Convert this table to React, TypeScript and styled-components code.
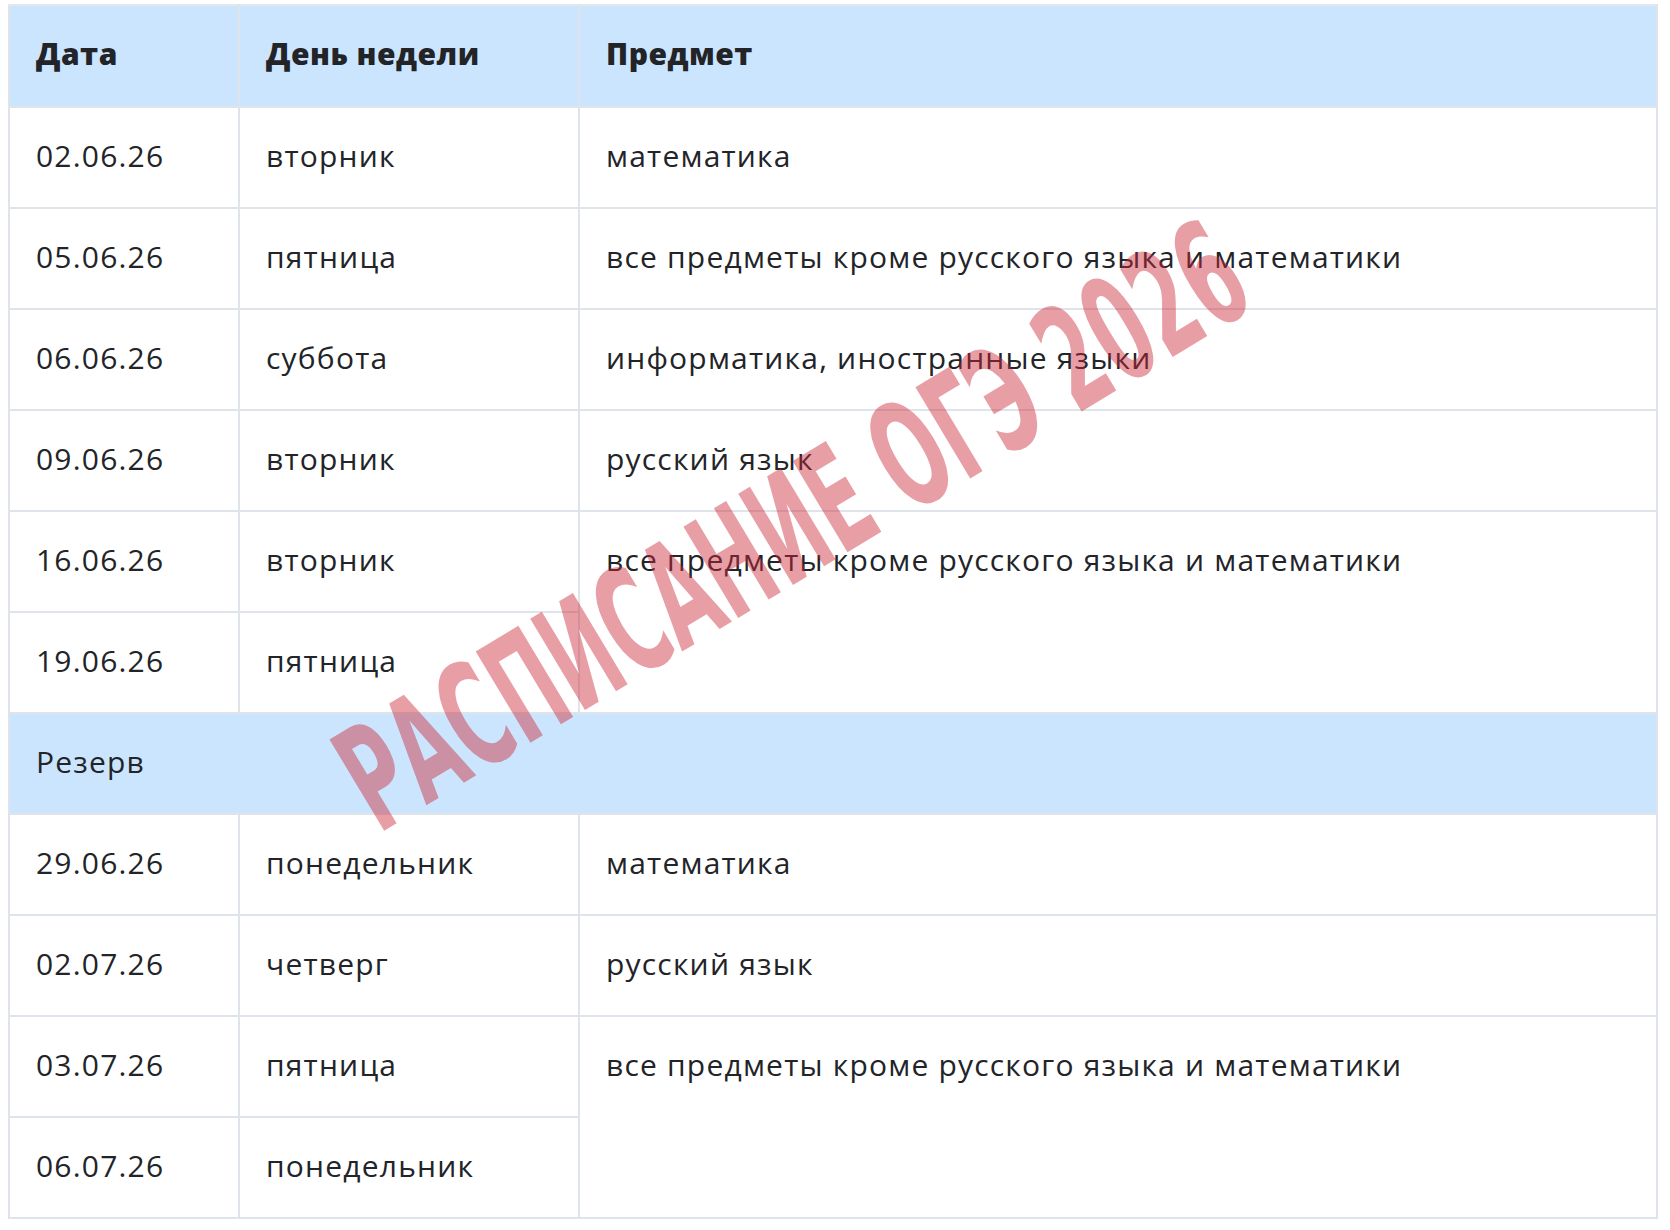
import * as React from "react";
import styled, { createGlobalStyle } from "styled-components";

const GlobalStyle = createGlobalStyle`
  html, body {
    margin: 0;
    padding: 0;
    background: #ffffff;
  }
  body {
    padding: 4px 8px;
    font-family: "Open Sans", "Noto Sans", "Liberation Sans", sans-serif;
    color: #222428;
  }
`;

const borderColor = "#dfe4ea";
const headBg = "#cce5fe";

const Wrapper = styled.div`
  position: relative;
  width: 1650px;
`;

const Table = styled.table`
  width: 1650px;
  table-layout: fixed;
  border-collapse: collapse;
  font-size: 30px;
  letter-spacing: 1.2px;
`;

const HeadCell = styled.th`
  height: 94px;
  padding: 0 26px 6px;
  text-align: left;
  vertical-align: middle;
  font-weight: 800;
  letter-spacing: 0.5px;
  background: ${headBg};
  border: 2px solid ${borderColor};
  border-top-color: #e4e8ec;
`;

const Cell = styled.td`
  height: 99px;
  padding: 0 26px;
  line-height: 96px;
  vertical-align: top;
  font-weight: 400;
  border: 2px solid ${borderColor};
  white-space: nowrap;
`;

const SectionCell = styled(Cell)`
  background: ${headBg};
`;

const Stamp = styled.div`
  position: absolute;
  left: 784px;
  top: 522px;
  transform: translate(-50%, -50%) rotate(-31deg) scaleX(0.58);
  font-family: "DejaVu Sans Condensed", "DejaVu Sans", sans-serif;
  font-weight: 700;
  font-size: 146px;
  line-height: 1;
  letter-spacing: 0;
  white-space: nowrap;
  color: rgba(205, 40, 55, 0.45);
  pointer-events: none;
`;

type Row = { date: string; day: string; subject?: string; span?: number };

const main: Row[] = [
  { date: "02.06.26", day: "вторник", subject: "математика" },
  { date: "05.06.26", day: "пятница", subject: "все предметы кроме русского языка и математики" },
  { date: "06.06.26", day: "суббота", subject: "информатика, иностранные языки" },
  { date: "09.06.26", day: "вторник", subject: "русский язык" },
  { date: "16.06.26", day: "вторник", subject: "все предметы кроме русского языка и математики", span: 2 },
  { date: "19.06.26", day: "пятница" },
];

const reserve: Row[] = [
  { date: "29.06.26", day: "понедельник", subject: "математика" },
  { date: "02.07.26", day: "четверг", subject: "русский язык" },
  { date: "03.07.26", day: "пятница", subject: "все предметы кроме русского языка и математики", span: 2 },
  { date: "06.07.26", day: "понедельник" },
];

const renderRow = (r: Row) => (
  <tr key={r.date}>
    <Cell>{r.date}</Cell>
    <Cell>{r.day}</Cell>
    {r.subject && <Cell rowSpan={r.span || 1}>{r.subject}</Cell>}
  </tr>
);

export default function App() {
  return (
    <>
      <GlobalStyle />
      <Wrapper>
        <Table>
          <colgroup>
            <col style={{ width: 230 }} />
            <col style={{ width: 340 }} />
            <col />
          </colgroup>
          <thead>
            <tr>
              <HeadCell>Дата</HeadCell>
              <HeadCell>День недели</HeadCell>
              <HeadCell>Предмет</HeadCell>
            </tr>
          </thead>
          <tbody>
            {main.map(renderRow)}
            <tr>
              <SectionCell colSpan={3}>Резерв</SectionCell>
            </tr>
            {reserve.map(renderRow)}
          </tbody>
        </Table>
        <Stamp>РАСПИСАНИЕ ОГЭ 2026</Stamp>
      </Wrapper>
    </>
  );
}
